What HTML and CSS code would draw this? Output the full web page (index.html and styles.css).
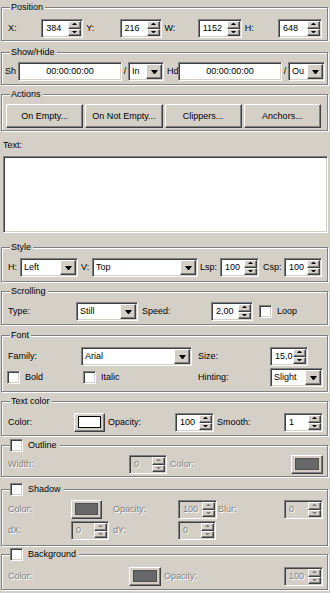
FILE: index.html
```html
<!DOCTYPE html>
<html lang="en">
<head>
<meta charset="utf-8">
<title>Text properties</title>
<link rel="stylesheet" href="styles.css">
</head>
<body>
<div class="panel">

<fieldset class="grp g-pos">
  <legend>Position</legend>
  <div class="row first">
    <span class="lbl flex">X:</span>
    <span class="spin w42"><span class="val">384</span><span class="arr"><i class="up"></i><i class="dn"></i></span></span>
    <span class="lbl flex">Y:</span>
    <span class="spin w42"><span class="val">216</span><span class="arr"><i class="up"></i><i class="dn"></i></span></span>
    <span class="lbl flex">W:</span>
    <span class="spin w44"><span class="val">1152</span><span class="arr"><i class="up"></i><i class="dn"></i></span></span>
    <span class="lbl flex">H:</span>
    <span class="spin w44"><span class="val">648</span><span class="arr"><i class="up"></i><i class="dn"></i></span></span>
  </div>
</fieldset>

<fieldset class="grp g-show">
  <legend>Show/Hide</legend>
  <div class="row first wide">
    <span class="lbl w13 p0">Sh</span>
    <span class="field flex">00:00:00:00</span>
    <span class="slash">/</span>
    <span class="combo w36"><span class="txt">In</span><span class="dd"></span></span>
    <span class="lbl w14">Hd</span>
    <span class="field flex">00:00:00:00</span>
    <span class="slash">/</span>
    <span class="combo w37"><span class="txt">Ou</span><span class="dd"></span></span>
  </div>
</fieldset>

<fieldset class="grp g-act">
  <legend>Actions</legend>
  <div class="row first btnrow">
    <span class="btn">On Empty...</span>
    <span class="btn">On Not Empty...</span>
    <span class="btn">Clippers...</span>
    <span class="btn">Anchors...</span>
  </div>
</fieldset>

<div class="textlbl">Text:</div>
<div class="textarea"></div>

<fieldset class="grp g-style">
  <legend>Style</legend>
  <div class="row first">
    <span class="lbl w15">H:</span>
    <span class="combo w58"><span class="txt">Left</span><span class="dd"></span></span>
    <span class="lbl w14">V:</span>
    <span class="combo w106"><span class="txt">Top</span><span class="dd"></span></span>
    <span class="lbl w22 p2">Lsp:</span>
    <span class="spin w39"><span class="val">100</span><span class="arr"><i class="up"></i><i class="dn"></i></span></span>
    <span class="lbl w25 p4">Csp:</span>
    <span class="spin w38"><span class="val">100</span><span class="arr"><i class="up"></i><i class="dn"></i></span></span>
  </div>
</fieldset>

<fieldset class="grp g-scroll">
  <legend>Scrolling</legend>
  <div class="row first">
    <span class="lbl w71">Type:</span>
    <span class="combo w62"><span class="txt">Still</span><span class="dd"></span></span>
    <span class="lbl w73 p4">Speed:</span>
    <span class="spin w42"><span class="val">2,00</span><span class="arr"><i class="up"></i><i class="dn"></i></span></span>
    <span class="chk loop"></span>
    <span class="ctext">Loop</span>
  </div>
</fieldset>

<fieldset class="grp g-font">
  <legend>Font</legend>
  <div class="row first">
    <span class="lbl w76">Family:</span>
    <span class="combo w111"><span class="txt">Arial</span><span class="dd"></span></span>
    <span class="lbl w78 p6">Size:</span>
    <span class="spin w38"><span class="val">15,0</span><span class="arr"><i class="up"></i><i class="dn"></i></span></span>
  </div>
  <div class="row second">
    <span class="cell w76"><span class="chk"></span><span class="ctext">Bold</span></span>
    <span class="cell w117"><span class="chk"></span><span class="ctext">Italic</span></span>
    <span class="lbl w72 p0">Hinting:</span>
    <span class="combo w53"><span class="txt">Slight</span><span class="dd"></span></span>
  </div>
</fieldset>

<fieldset class="grp g-color">
  <legend>Text color</legend>
  <div class="row first">
    <span class="lbl w69">Color:</span>
    <span class="cbtn w31"><span class="sw white"></span></span>
    <span class="lbl w70 p3">Opacity:</span>
    <span class="spin w39"><span class="val">100</span><span class="arr"><i class="up"></i><i class="dn"></i></span></span>
    <span class="lbl w70 p3">Smooth:</span>
    <span class="spin w39"><span class="val">1</span><span class="arr"><i class="up"></i><i class="dn"></i></span></span>
  </div>
</fieldset>

<fieldset class="grp chkgrp g-outline">
  <legend><span class="chk"></span><span class="ltext">Outline</span></legend>
  <div class="row first">
    <span class="lbl w124 dis">Width:</span>
    <span class="spin w38 off"><span class="val">0</span><span class="arr"><i class="up"></i><i class="dn"></i></span></span>
    <span class="lbl w124 p3 dis">Color:</span>
    <span class="cbtn w32"><span class="sw gray"></span></span>
  </div>
</fieldset>

<fieldset class="grp chkgrp g-shadow">
  <legend><span class="chk"></span><span class="ltext">Shadow</span></legend>
  <div class="row first">
    <span class="lbl w66 dis">Color:</span>
    <span class="cell w38"><span class="cbtn w31"><span class="sw gray"></span></span></span>
    <span class="lbl w69 p4 dis">Opacity:</span>
    <span class="spin w39 off"><span class="val">100</span><span class="arr"><i class="up"></i><i class="dn"></i></span></span>
    <span class="lbl w67 p1 dis">Blur:</span>
    <span class="spin w39 off"><span class="val">0</span><span class="arr"><i class="up"></i><i class="dn"></i></span></span>
  </div>
  <div class="row second">
    <span class="lbl w66 dis">dX:</span>
    <span class="spin w38 off"><span class="val">0</span><span class="arr"><i class="up"></i><i class="dn"></i></span></span>
    <span class="lbl w69 p4 dis">dY:</span>
    <span class="spin w38 off"><span class="val">0</span><span class="arr"><i class="up"></i><i class="dn"></i></span></span>
  </div>
</fieldset>

<fieldset class="grp chkgrp g-bg">
  <legend><span class="chk"></span><span class="ltext">Background</span></legend>
  <div class="row first">
    <span class="lbl w124 dis">Color:</span>
    <span class="cbtn w32"><span class="sw gray"></span></span>
    <span class="lbl w123 p3 dis">Opacity:</span>
    <span class="spin w39 off"><span class="val">100</span><span class="arr"><i class="up"></i><i class="dn"></i></span></span>
  </div>
</fieldset>

</div>
</body>
</html>
```

FILE: styles.css
```css
* { box-sizing: border-box; }
html, body { margin: 0; padding: 0; }
body {
  width: 330px;
  height: 593px;
  overflow: hidden;
  background: #d4d0c8;
  color: #000;
  font-family: "Liberation Sans", Arial, sans-serif;
  font-size: 9px;
  line-height: 11px;
}
.panel { padding-top: 2px; }

/* group boxes */
.grp {
  margin: 4px 2px 0 1px;
  padding: 0 5px 2px 3px;
  border: 1px solid #808080;
  box-shadow: 1px 1px 0 #fff, inset 1px 1px 0 #fff;
  min-width: 0;
}
.grp legend {
  padding: 0 2px 0 1px;
  margin-left: 5px;
  line-height: 11px;
  background: #d4d0c8;
}
.chkgrp legend {
  display: flex;
  align-items: center;
  margin-left: 5px;
  padding: 0 3px 0 0;
  line-height: 13px;
}
.chkgrp legend .ltext { margin-left: 5px; }

/* per-group vertical rhythm */
.g-pos { margin-top: 0; }
.g-pos .first { margin-top: 6px; }
.g-show { margin-top: 6px; padding-bottom: 3px; }
.g-show .first { margin-top: 4px; }
.g-act .first { margin-top: 4px; }
.g-style { margin-top: 9px; padding-bottom: 4px; }
.g-scroll { padding-bottom: 3px; }
.g-font { margin-top: 5px; padding-bottom: 4px; }
.g-font .first { margin-top: 6px; }
.g-color { padding-bottom: 3px; }
.g-color .first { margin-top: 6px; }
.g-outline { margin-top: 3px; }
.g-outline .first { margin-top: 3px; }
.g-shadow { margin-top: 6px; padding-bottom: 5px; }
.g-shadow .first { margin-top: 4px; }
.g-bg { margin-top: 2px; padding-bottom: 3px; }
.g-bg .first { margin-top: 6px; }

/* rows */
.row { display: flex; align-items: center; height: 19px; }
.row.first { }
.g-scroll .first, .g-style .first { margin-top: 5px; }
.row.second { margin-top: 2px; }
.row.wide { margin-right: -3px; }
.btnrow { height: 24px; gap: 2px; margin-left: 1px; margin-right: 1px; }

.lbl { flex: none; padding-left: 3px; white-space: nowrap; }
.lbl.flex { flex: 1; }
.p0 { padding-left: 0; }
.p1 { padding-left: 1px; }
.p2 { padding-left: 2px; }
.p3 { padding-left: 3px; }
.p4 { padding-left: 4px; }
.p6 { padding-left: 6px; }
.cell { flex: none; display: flex; align-items: center; }
.flex { flex: 1; min-width: 0; }

.w13 { width: 13px; } .w14 { width: 14px; } .w15 { width: 15px; }
.w22 { width: 22px; } .w25 { width: 25px; } .w31 { width: 31px; }
.w32 { width: 32px; } .w36 { width: 36px; } .w37 { width: 37px; }
.w38 { width: 38px; } .w39 { width: 39px; } .w42 { width: 42px; }
.w44 { width: 44px; } .w53 { width: 53px; } .w58 { width: 58px; }
.w62 { width: 62px; } .w66 { width: 66px; } .w67 { width: 67px; }
.w69 { width: 69px; } .w70 { width: 70px; } .w71 { width: 71px; }
.w72 { width: 72px; } .w73 { width: 73px; } .w76 { width: 76px; }
.w78 { width: 78px; } .w106 { width: 106px; } .w111 { width: 111px; }
.w117 { width: 117px; } .w123 { width: 123px; } .w124 { width: 124px; }

/* sunken white boxes */
.spin, .combo, .field, .textarea, .chk {
  background: #fff;
  border: 1px solid;
  border-color: #808080 #fff #fff #808080;
  box-shadow: inset 1px 1px 0 #404040, inset -1px -1px 0 #d4d0c8;
}
.spin, .combo {
  flex: none;
  display: flex;
  height: 19px;
  padding: 1px;
}
.spin .val { flex: 1; padding-left: 3px; line-height: 15px; overflow: hidden; white-space: nowrap; }
.spin .arr { width: 13px; display: flex; flex-direction: column; }
.spin .arr i, .combo .dd, .btn, .cbtn {
  background: #d4d0c8;
  border: 1px solid;
  border-color: #fff #404040 #404040 #fff;
  box-shadow: inset -1px -1px 0 #808080;
}
.spin .arr i {
  flex: 1;
  display: flex;
  align-items: center;
  justify-content: center;
}
.spin .arr i::after {
  content: "";
  width: 1px;
  height: 0;
  border-left: 2px solid transparent;
  border-right: 2px solid transparent;
}
.spin .arr i.up::after { border-bottom: 2px solid #000; margin-top: -1px; }
.spin .arr i.dn::after { border-top: 2px solid #000; margin-top: -1px; }

.spin.off { background: #d4d0c8; }
.spin.off .val { color: #808080; text-shadow: 1px 1px 0 #fff; }
.spin.off .arr i.up::after { border-bottom-color: #808080; }
.spin.off .arr i.dn::after { border-top-color: #808080; }

.combo .txt { flex: 1; padding-left: 2px; line-height: 15px; overflow: hidden; white-space: nowrap; }
.combo .dd {
  width: 16px;
  display: flex;
  align-items: center;
  justify-content: center;
}
.combo .dd::after {
  content: "";
  width: 1px;
  height: 0;
  border-left: 3px solid transparent;
  border-right: 3px solid transparent;
  border-top: 4px solid #000;
}

.field {
  height: 19px;
  line-height: 17px;
  text-align: center;
}
.slash { flex: none; width: 6px; text-align: center; }

/* push buttons */
.btn {
  flex: 1;
  height: 24px;
  display: flex;
  align-items: center;
  justify-content: center;
  white-space: nowrap;
}

/* text area */
.textlbl { margin: 9px 0 0 3px; line-height: 11px; }
.textarea { margin: 5px 2px 0 3px; height: 77px; }

/* checkboxes */
.chk { flex: none; width: 13px; height: 13px; display: inline-block; }
.cell .chk { margin-left: 2px; }
.ctext { margin-left: 5px; }
.loop { margin-left: 6px; }

/* colour buttons */
.cbtn {
  flex: none;
  height: 19px;
  display: flex;
  align-items: center;
  justify-content: center;
  padding: 2px 3px 3px 3px;
}
.sw { width: 100%; height: 100%; border: 1px solid #000; }
.sw.white { background: #fff; }
.sw.gray { background: #686868; border-color: #505050; }

.dis { color: #808080; text-shadow: 1px 1px 0 #fff; }
```
